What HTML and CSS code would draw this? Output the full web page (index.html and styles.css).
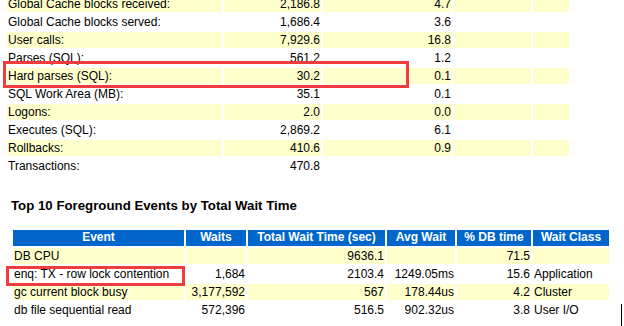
FILE: index.html
```html
<!DOCTYPE html>
<html>
<head>
<meta charset="utf-8">
<link rel="stylesheet" href="styles.css">
</head>
<body>
<div class="page">
  <table class="awr load">
    <colgroup><col class="l1"><col class="l2"><col class="l3"><col class="l4"><col class="l5"></colgroup>
    <tr class="y"><td>Global Cache blocks received:</td><td class="r">2,186.8</td><td class="r">4.7</td><td></td><td></td></tr>
    <tr class="w"><td>Global Cache blocks served:</td><td class="r">1,686.4</td><td class="r">3.6</td><td></td><td></td></tr>
    <tr class="y"><td>User calls:</td><td class="r">7,929.6</td><td class="r">16.8</td><td></td><td></td></tr>
    <tr class="w"><td>Parses (SQL):</td><td class="r">561.2</td><td class="r">1.2</td><td></td><td></td></tr>
    <tr class="y"><td>Hard parses (SQL):</td><td class="r">30.2</td><td class="r">0.1</td><td></td><td></td></tr>
    <tr class="w"><td>SQL Work Area (MB):</td><td class="r">35.1</td><td class="r">0.1</td><td></td><td></td></tr>
    <tr class="y"><td>Logons:</td><td class="r">2.0</td><td class="r">0.0</td><td></td><td></td></tr>
    <tr class="w"><td>Executes (SQL):</td><td class="r">2,869.2</td><td class="r">6.1</td><td></td><td></td></tr>
    <tr class="y"><td>Rollbacks:</td><td class="r">410.6</td><td class="r">0.9</td><td></td><td></td></tr>
    <tr class="w"><td>Transactions:</td><td class="r">470.8</td><td></td><td></td><td></td></tr>
  </table>

  <h3 class="title">Top 10 Foreground Events by Total Wait Time</h3>

  <table class="awr events">
    <colgroup><col class="e1"><col class="e2"><col class="e3"><col class="e4"><col class="e5"><col class="e6"></colgroup>
    <tr><th>Event</th><th>Waits</th><th>Total Wait Time (sec)</th><th>Avg Wait</th><th>% DB time</th><th>Wait Class</th></tr>
    <tr class="y"><td>DB CPU</td><td class="r"></td><td class="r">9636.1</td><td class="r"></td><td class="r">71.5</td><td></td></tr>
    <tr class="w"><td>enq: TX - row lock contention</td><td class="r">1,684</td><td class="r">2103.4</td><td class="r">1249.05ms</td><td class="r">15.6</td><td>Application</td></tr>
    <tr class="y"><td>gc current block busy</td><td class="r">3,177,592</td><td class="r">567</td><td class="r">178.44us</td><td class="r">4.2</td><td>Cluster</td></tr>
    <tr class="w"><td>db file sequential read</td><td class="r">572,396</td><td class="r">516.5</td><td class="r">902.32us</td><td class="r">3.8</td><td>User I/O</td></tr>
  </table>

  <div class="mark mark-hard"></div>
  <div class="mark mark-enq"></div>
  <div class="edge-line"></div>
</div>
</body>
</html>
```

FILE: styles.css
```css
html, body {
  margin: 0;
  padding: 0;
  background: #ffffff;
}

.page {
  position: relative;
  width: 624px;
  height: 326px;
  overflow: hidden;
  font-family: "Liberation Sans", Arial, sans-serif;
  font-size: 12px;
  line-height: 14px;
  color: #000000;
}

.awr {
  border-collapse: separate;
  border-spacing: 2px;
  table-layout: fixed;
}

.awr td,
.awr th {
  box-sizing: border-box;
  height: 16px;
  padding: 1px 1px;
  vertical-align: top;
  white-space: nowrap;
  overflow: hidden;
}

.awr td.r {
  text-align: right;
}

.awr tr.y td {
  background: #ffffcc;
}

.awr tr.w td {
  background: #ffffff;
}

.awr th {
  background: #0066cc;
  color: #ffffff;
  font-weight: bold;
  text-align: center;
  padding: 0 4px 2px 4px;
}

.load {
  width: 566px;
  margin: -6px 0 0 5px;
}

.l1 { width: 215px; }
.l2 { width: 97px; }
.l3 { width: 129px; }
.l4 { width: 77px; }
.l5 { width: 36px; }

.title {
  margin: 22px 0 15px 11px;
  font-size: 13.25px;
  line-height: 15px;
  font-weight: bold;
  color: #000000;
}

.events {
  width: 600px;
  margin-left: 11px;
}

.e1 { width: 171px; }
.e2 { width: 60px; }
.e3 { width: 137px; }
.e4 { width: 68px; }
.e5 { width: 74px; }
.e6 { width: 76px; }

.mark {
  position: absolute;
  box-sizing: border-box;
  border: 3px solid #f03c3c;
}

.mark-hard {
  left: 3px;
  top: 61px;
  width: 406px;
  height: 27px;
}

.mark-enq {
  left: 6px;
  top: 266px;
  width: 179px;
  height: 20px;
}

.edge-line {
  position: absolute;
  left: 621px;
  top: 304px;
  width: 1px;
  height: 22px;
  background: #000000;
}
```
